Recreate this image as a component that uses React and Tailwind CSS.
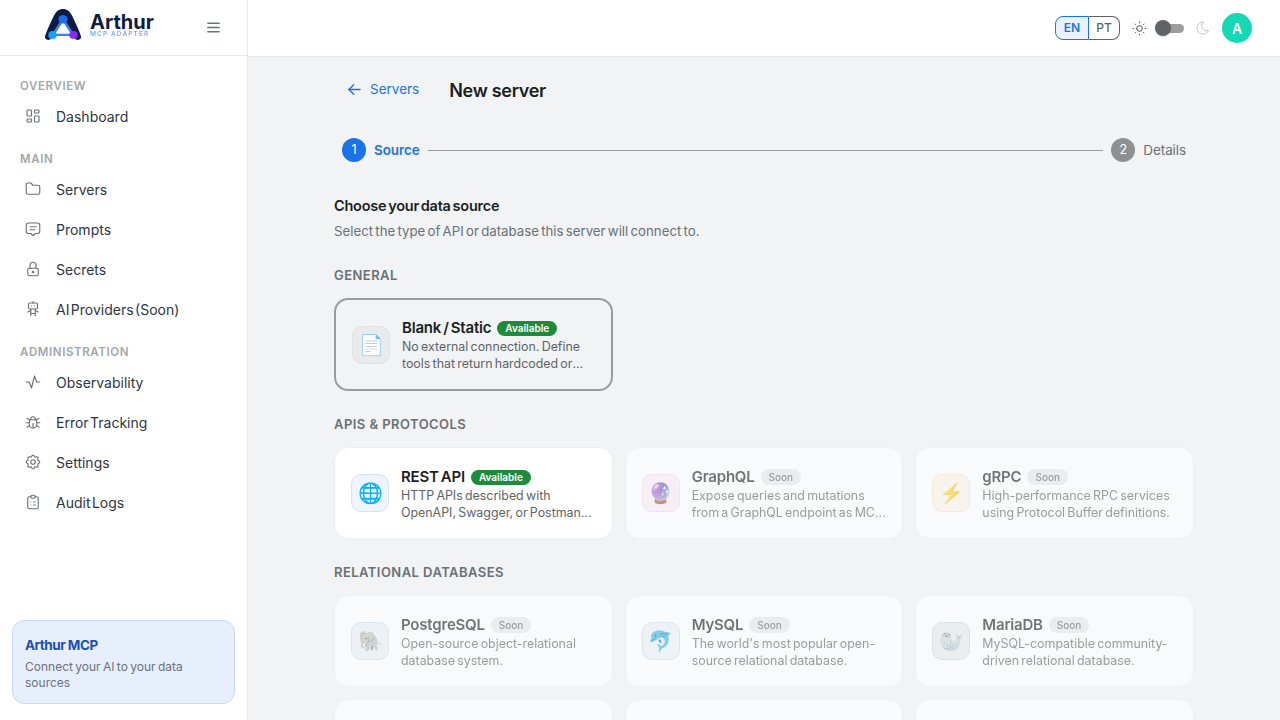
import {
  TbLayoutDashboard, TbFolder, TbMessage2, TbLock, TbRobot, TbActivity, TbBug, TbSettings,
  TbClipboardList, TbMenu2, TbSun, TbMoon, TbArrowLeft,
} from "react-icons/tb";

const nav = [
  { title: "OVERVIEW", items: [{ label: "Dashboard", icon: TbLayoutDashboard }] },
  {
    title: "MAIN",
    items: [
      { label: "Servers", icon: TbFolder },
      { label: "Prompts", icon: TbMessage2 },
      { label: "Secrets", icon: TbLock },
      { label: "AI Providers (Soon)", icon: TbRobot },
    ],
  },
  {
    title: "ADMINISTRATION",
    items: [
      { label: "Observability", icon: TbActivity },
      { label: "Error Tracking", icon: TbBug },
      { label: "Settings", icon: TbSettings },
      { label: "Audit Logs", icon: TbClipboardList },
    ],
  },
];

const sections = [
  {
    title: "GENERAL",
    cards: [
      {
        name: "Blank / Static", emoji: "📄", ok: true, selected: true,
        tint: "bg-[#e9eaec] border-[#dfe1e4]",
        desc: "No external connection. Define tools that return hardcoded or static data for your server.",
      },
    ],
  },
  {
    title: "APIS & PROTOCOLS",
    cards: [
      {
        name: "REST API", emoji: "🌐", ok: true,
        tint: "bg-[#eff4ff] border-[#d6e2fd]",
        desc: "HTTP APIs described with OpenAPI, Swagger, or Postman collections and definitions.",
      },
      {
        name: "GraphQL", emoji: "🔮",
        tint: "bg-[#fcecf7] border-[#f6d5ec]",
        desc: "Expose queries and mutations from a GraphQL endpoint as MCP tools for your agents.",
      },
      {
        name: "gRPC", emoji: "⚡",
        tint: "bg-[#fff4e8] border-[#fde3c8]",
        desc: "High-performance RPC services using Protocol Buffer definitions.",
      },
    ],
  },
  {
    title: "RELATIONAL DATABASES",
    cards: [
      {
        name: "PostgreSQL", emoji: "🐘",
        tint: "bg-[#e9f0f6] border-[#cfdde9]",
        desc: "Open-source object-relational database system.",
      },
      {
        name: "MySQL", emoji: "🐬",
        tint: "bg-[#e9f2f7] border-[#cfe0ec]",
        desc: "The world's most popular open-source relational database.",
      },
      {
        name: "MariaDB", emoji: "🦭",
        tint: "bg-[#e4ecec] border-[#cbd6d8]",
        desc: "MySQL-compatible community-driven relational database.",
      },
      { name: "SQL Server", emoji: "🗄️", tint: "bg-[#e9f0f6] border-[#cfdde9]", desc: "Microsoft relational database engine." },
      { name: "Oracle", emoji: "🔴", tint: "bg-[#fcecec] border-[#f6d5d5]", desc: "Enterprise relational database system." },
      { name: "SQLite", emoji: "🪶", tint: "bg-[#e9f0f6] border-[#cfdde9]", desc: "Lightweight file-based relational database." },
    ],
  },
];

function Logo() {
  return (
    <div className="flex items-center gap-[8px] mb-[6px]">
      <svg width="38" height="32" viewBox="0 0 38 34" preserveAspectRatio="none">
        <path
          d="M1 29C3 22 7 14 9.500 8C12 2.500 15 0 19 0C23 0 26 2.500 28.500 8C31 14 35 22 37 29C37.500 32 35 33.500 32 32.500C28 28 24 27 19 27C14 27 10 28 6 32.500C3 33.500 .5 32 1 29Z"
          fill="#0e1b45"
        />
        <path d="M19 11L9 27.500H29L19 11Z" fill="#ffffff" stroke="#3f7df6" strokeWidth="2.600" />
        <circle cx="19" cy="11" r="4.500" fill="#1a6ff0" />
        <circle cx="8.500" cy="27.500" r="4.200" fill="#12a4f5" />
        <circle cx="29.500" cy="27.500" r="4.200" fill="#8a2cf0" />
      </svg>
      <div className="flex flex-col mt-[3px]">
        <span className="text-[20px] leading-[15px] font-bold text-[#101b3f]">Arthur</span>
        <span className="text-[6.500px] leading-[8px] font-semibold tracking-[1.100px] bg-gradient-to-r from-[#4fb0f6] to-[#a78bfa] bg-clip-text text-transparent">MCP ADAPTER</span>
      </div>
    </div>
  );
}

function Sidebar() {
  return (
    <aside className="w-[248px] shrink-0 h-full bg-white border-r border-[#e5e7eb] flex flex-col">
      <div className="h-[56px] shrink-0 border-b border-[#e5e7eb] flex items-center pl-[44px] pr-[25px] justify-between">
        <Logo />
        <TbMenu2 className="text-[#6b7280]" size={17} strokeWidth={2} />
      </div>
      <nav className="flex-1 pt-[22px]">
        {nav.map((group) => (
          <div key={group.title} className="mb-[14px]">
            <div className="px-5 mb-[3px] h-4 leading-4 text-[11.500px] font-semibold tracking-[0.600px] text-[#a3a6ab]">
              {group.title}
            </div>
            {group.items.map((item) => (
              <div key={item.label} className="h-10 flex items-center pl-[24px] pb-[2px] gap-[14px] text-[14px] text-[#2f3542]">
                <item.icon size={18} strokeWidth={1.500} className="text-[#6b7075] shrink-0" />
                <span className="[word-spacing:-2.500px]">{item.label}</span>
              </div>
            ))}
          </div>
        ))}
      </nav>
      <div className="mx-3 mb-4 h-[84px] rounded-xl bg-[#e8effc] border border-[#c9d9fa] px-3 pt-[15px]">
        <div className="text-[13.500px] leading-[18px] font-bold text-[#1a4fb4] tracking-[-0.500px]">Arthur MCP</div>
        <div className="mt-[5px] text-[12px] leading-[16px] text-[#6b7280] [word-spacing:-1px]">Connect your AI to your data sources</div>
      </div>
    </aside>
  );
}

function Header() {
  return (
    <header className="h-[57px] shrink-0 bg-white border-b border-[#e5e7eb] flex items-center justify-end pr-[28px]">
      <div className="flex h-6 rounded-lg text-[12px] font-semibold">
        <div className="w-[34px] flex items-center justify-center rounded-l-lg border border-[#1a73e8] bg-[#eaf2fe] text-[#1a73e8]">EN</div>
        <div className="w-[31px] flex items-center justify-center rounded-r-lg border border-l-0 border-[#5f6368] text-[#5f6368] font-medium">PT</div>
      </div>
      <TbSun className="ml-[11px] text-[#3c4043]" size={17} strokeWidth={1.300} />
      <div className="relative ml-[10px] w-[26px] h-[9px] rounded-full bg-[#9e9e9e]">
        <div className="absolute left-[-3px] top-[-3.500px] w-4 h-4 rounded-full bg-[#5f6368] shadow-sm" />
      </div>
      <TbMoon className="ml-[10.500px] text-[#c4c6c9]" size={16} strokeWidth={1.500} />
      <div className="ml-[11.500px] w-[30px] h-[30px] rounded-full bg-[#14d9b4] text-white text-[14px] font-semibold flex items-center justify-center">A</div>
    </header>
  );
}

function Card({ card }) {
  const border = card.selected ? "h-[93px] border-2 border-[#9a9ca0]" : "h-[92px] border border-[#eceef0] bg-white";
  return (
    <div className={`rounded-[14px] flex items-center gap-[12px] pl-[16px] pr-[16px] ${border} ${card.ok ? "" : "opacity-60"}`}>
      <div className={`w-[38px] h-[38px] shrink-0 rounded-[10px] border flex items-center justify-center text-[20px] ${card.tint}`}>
        {card.emoji}
      </div>
      <div className="min-w-0 flex-1">
        <div className="flex items-center gap-[6px] h-[21px] pt-[2px]">
          <span className="text-[15px] font-semibold text-[#1c1e22] tracking-[-0.200px] [word-spacing:-1.500px]">{card.name}</span>
          {card.ok ? (
            <span className="h-[15px] px-2 rounded-full bg-[#1e8a3c] text-white text-[10px] leading-[15px] font-semibold">Available</span>
          ) : (
            <span className="h-[16px] px-2 rounded-full bg-[#e6e8e9] text-[#5f6368] text-[10px] leading-[16px] font-medium">Soon</span>
          )}
        </div>
        <p className="text-[12.400px] leading-[17px] text-[#5f6368] line-clamp-2 [word-spacing:-1.200px]">{card.desc}</p>
      </div>
    </div>
  );
}

export default function App() {
  return (
    <div className="h-screen overflow-hidden flex bg-[#f1f3f5] font-['Inter',sans-serif]">
      <Sidebar />
      <div className="flex-1 min-w-0 flex flex-col">
        <Header />
        <main className="flex-1 overflow-hidden">
          <div className="w-[860px] mx-auto pt-[21px]">
            <div className="flex items-center h-6">
              <div className="flex items-center gap-[6px] pl-[11px] pb-[2px] text-[#1a73e8] text-[13.500px]">
                <TbArrowLeft size={19} strokeWidth={1.700} />
                <span>Servers</span>
              </div>
              <h1 className="ml-[30px] text-[18px] font-semibold text-[#1c1e22] tracking-[-0.300px]">New server</h1>
            </div>
            <div className="flex items-center px-2 mt-[36px] h-6 text-[13.500px]">
              <div className="w-6 h-6 rounded-full bg-[#1a73e8] text-white flex items-center justify-center text-[12.500px]">1</div>
              <span className="ml-2 font-semibold text-[#1a73e8] tracking-[-0.100px]">Source</span>
              <div className="flex-1 mx-2 h-px bg-[#9a9ca0]" />
              <div className="w-6 h-6 rounded-full bg-[#8f9094] text-white flex items-center justify-center text-[12.500px]">2</div>
              <span className="ml-2 text-[#6b7075] tracking-[-0.100px]">Details</span>
            </div>
            <h2 className="mt-[34px] text-[14.500px] leading-[20px] font-semibold text-[#1c1e22] [word-spacing:-1.500px] tracking-[-0.250px]">Choose your data source</h2>
            <p className="mt-[5px] pb-[1px] text-[13.250px] leading-[20px] text-[#6b7075] [word-spacing:-1.500px]">Select the type of API or database this server will connect to.</p>
            {sections.map((section) => (
              <section key={section.title} className="mt-[23px]">
                <h3 className="h-5 leading-5 text-[13px] font-semibold tracking-[0.450px] text-[#6b7075] mb-[13px]">{section.title}</h3>
                <div className="grid grid-cols-3 gap-3">
                  {section.cards.map((card) => (
                    <Card key={card.name} card={card} />
                  ))}
                </div>
              </section>
            ))}
          </div>
        </main>
      </div>
    </div>
  );
}
